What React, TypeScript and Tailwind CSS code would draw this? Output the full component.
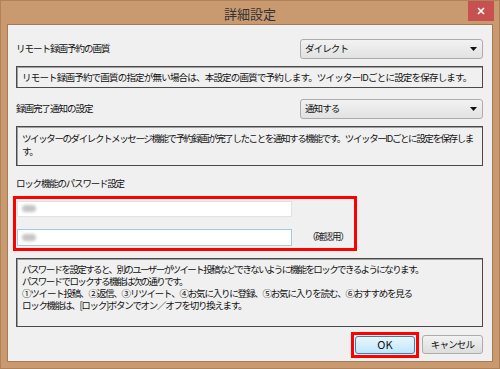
import React from "react";

const font = { fontFamily: '"Noto Sans CJK JP", "Noto Sans", sans-serif' };

function Select({ value }: { value: string }) {
  return (
    <div className="w-[183px] h-[20px] rounded-[3px] border border-[#acacac] bg-gradient-to-b from-[#f2f2f2] to-[#e2e2e2] flex items-center pl-[4px] pr-[5px] text-[9.5px] tracking-[-0.9px] text-[#111]">
      <span className="flex-1 leading-none">{value}</span>
      <svg width="7" height="4" viewBox="0 0 7 4"><path d="M0 0h7L3.5 4z" fill="#111" /></svg>
    </div>
  );
}

function Desc({ children, h }: { children: React.ReactNode; h: string }) {
  return (
    <div className={`border border-[#4a4a4a] shadow-[inset_1px_1px_0_#a0a0a0] bg-[#f0f0f0] px-[5px] text-[9.5px] leading-[12px] text-[#111] overflow-hidden whitespace-nowrap ${h}`}>
      {children}
    </div>
  );
}

function Masked() {
  return <div className="ml-[4px] w-[14px] h-[7px] rounded-full bg-[#c4c4c4] blur-[1.5px]" />;
}

export default function App() {
  return (
    <div style={font} className="w-[500px] h-[369px] bg-[#c99a70] border border-[#b0825a] flex flex-col overflow-hidden">
      <div className="h-[23px] flex items-center relative">
        <div className="flex-1 text-center text-[13px] text-[#333] leading-none pt-[1px]">詳細設定</div>
        <div className="absolute right-[5px] top-0 w-[26px] h-[20px] bg-[#c75050] flex items-center justify-center">
          <svg width="8" height="8" viewBox="0 0 8 8"><path d="M1 1l6 6M7 1L1 7" stroke="#fff" strokeWidth="1.6" /></svg>
        </div>
      </div>
      <div className="mx-[6px] mb-[6px] flex-1 bg-[#f0f0f0] border border-[#a87a54] flex flex-col pl-[8px] pr-[9px]">
        <div className="mt-[14px] flex items-center justify-between h-[20px]">
          <span className="text-[9.5px] tracking-[-1px] text-[#111] leading-none">リモート録画予約の画質</span>
          <Select value="ダイレクト" />
        </div>
        <Desc h="mt-[7px] h-[22px] flex items-center tracking-[-0.8px]">
          リモート録画予約で画質の指定が無い場合は、本設定の画質で予約します。ツイッターIDごとに設定を保存します。
        </Desc>
        <div className="mt-[11px] flex items-center justify-between h-[20px]">
          <span className="text-[9.5px] tracking-[-1px] text-[#111] leading-none">録画完了通知の設定</span>
          <Select value="通知する" />
        </div>
        <Desc h="mt-[7px] h-[40px] pt-[5px] leading-[13px] tracking-[-1.4px]">
          <div>ツイッターのダイレクトメッセージ機能で予約録画が完了したことを通知する機能です。ツイッターIDごとに設定を保存しま</div>
          <div>す。</div>
        </Desc>
        <div className="mt-[13px] text-[9.5px] tracking-[-1.2px] text-[#111] leading-none">ロック機能のパスワード設定</div>
        <div className="mt-[7px] -ml-[3px] w-[344px] h-[55px] border-[3px] border-[#ff0000] flex flex-col pl-[1px] pt-[2px]">
          <div className="w-[275px] h-[16px] bg-white border border-[#e2e2e2] flex items-center"><Masked /></div>
          <div className="mt-[12px] flex items-center">
            <div className="w-[275px] h-[17px] bg-white border border-[#a6c8e6] flex items-center"><Masked /></div>
            <span className="ml-[15px] text-[9.5px] tracking-[-1.2px] text-[#222] leading-none">（確認用）</span>
          </div>
        </div>
        <Desc h="mt-[7px] h-[69px] pt-[4px]">
          <div className="tracking-[-1.6px]">パスワードを設定すると、別のユーザーがツイート投稿などできないように機能をロックできるようになります。</div>
          <div className="tracking-[-1.6px]">パスワードでロックする機能は次の通りです。</div>
          <div className="tracking-[-1.2px]">①ツイート投稿、②返信、③リツイート、④お気に入りに登録、⑤お気に入りを読む、⑥おすすめを見る</div>
          <div className="tracking-[-1.3px]">ロック機能は、[ロック]ボタンでオン／オフを切り換えます。</div>
        </Desc>
        <div className="mt-[5px] flex justify-end items-center">
          <div className="border-[3px] border-[#ff0000] p-[1px]">
            <div className="w-[60px] h-[18px] rounded-[3px] border border-[#3c7fb1] bg-gradient-to-b from-[#eaf6fd] to-[#bee6fd] flex items-center justify-center text-[11px] text-[#111] leading-none">OK</div>
          </div>
          <div className="ml-[3px] w-[61px] h-[19px] rounded-[3px] border border-[#acacac] bg-gradient-to-b from-[#f2f2f2] to-[#dddddd] flex items-center justify-center text-[9.5px] tracking-[-0.8px] text-[#111] leading-none">キャンセル</div>
        </div>
      </div>
    </div>
  );
}
